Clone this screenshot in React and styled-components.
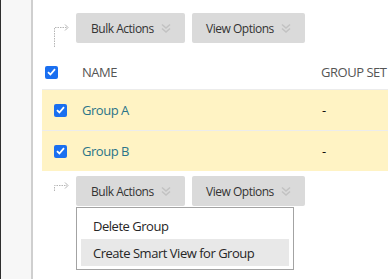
import React from "react";
import styled, { createGlobalStyle } from "styled-components";

const GlobalStyle = createGlobalStyle`
  html, body {
    margin: 0;
    padding: 0;
    background: #ffffff;
    font-family: "Open Sans", "Noto Sans", sans-serif;
    color: #333333;
    letter-spacing: -0.03em;
  }
`;

const Page = styled.div`
  display: flex;
  width: 388px;
  height: 279px;
  overflow: hidden;
`;

const DarkEdge = styled.div`
  width: 1px;
  background: #2e2e2e;
  flex-shrink: 0;
`;

const SidePanel = styled.div`
  width: 30px;
  background: #f7f7f7;
  border-right: 2px solid #cfcfcf;
  flex-shrink: 0;
`;

const Content = styled.div`
  flex: 1;
  padding-left: 9px;
  min-width: 0;
`;

const Toolbar = styled.div`
  position: relative;
  display: flex;
  align-items: flex-start;
  gap: 7px;
  height: 30px;
  margin-top: ${p => p.top}px;
  padding-left: 34px;
`;

const Connector = styled.svg`
  position: absolute;
  left: 10px;
  top: ${p => p.offset}px;
`;

const ActionButton = styled.div`
  position: relative;
  display: flex;
  align-items: center;
  width: ${p => p.width}px;
  height: 30px;
  box-sizing: border-box;
  padding-left: ${p => p.pad}px;
  background: #dadada;
  border-radius: 2px;
  font-size: 12px;
  color: #333333;
`;

const Chevron = styled.svg`
  margin-left: 7px;
`;

const Menu = styled.div`
  position: absolute;
  left: 0;
  top: 31px;
  width: 218px;
  box-sizing: border-box;
  background: #ffffff;
  border: 1px solid #a3a3a3;
  padding: 4px 4px 3px;
  z-index: 2;
`;

const MenuItem = styled.div`
  height: 27px;
  display: flex;
  align-items: center;
  padding-left: 12px;
  font-size: 13px;
  color: #262626;
  background: ${p => (p.active ? "#e8e8e8" : "transparent")};
  white-space: nowrap;
`;

const Table = styled.div`
  margin-top: 12px;
`;

const HeaderRow = styled.div`
  display: grid;
  grid-template-columns: 40px 239px 1fr;
  align-items: center;
  height: 34px;
  font-size: 13px;
  color: #555555;
  white-space: nowrap;
  overflow: hidden;
`;

const Row = styled.div`
  display: grid;
  grid-template-columns: 40px 239px 1fr;
  align-items: center;
  height: 40px;
  background: #fff3c4;
  border-top: 1px solid #ececec;
  font-size: 13px;
`;

const CheckCell = styled.div`
  display: flex;
  align-items: center;
  padding-left: ${p => p.pad}px;
`;

const Box = styled.span`
  display: inline-flex;
  align-items: center;
  justify-content: center;
  width: 13px;
  height: 13px;
  background: #1a6ff0;
  border-radius: 2px;
`;

const GroupName = styled.span`
  color: #2b7489;
`;

const Dash = styled.span`
  color: #111111;
  padding-left: 1px;
`;

const Check = ({ pad }) => (
  <CheckCell pad={pad}>
    <Box>
      <svg width="9" height="8" viewBox="0 0 9 8">
        <path d="M1 4.2 L3.4 6.5 L8 1.2" fill="none" stroke="#fff" strokeWidth="1.8" />
      </svg>
    </Box>
  </CheckCell>
);

const DoubleChevron = () => (
  <Chevron width="10" height="11" viewBox="0 0 10 11">
    <path d="M1 1.5 L5 5 L9 1.5 M1 5.5 L5 9 L9 5.5" fill="none" stroke="#c2c2c2" strokeWidth="1.6" />
  </Chevron>
);

const Arrow = ({ offset, height, turnY }) => (
  <Connector offset={offset} width="20" height={height} viewBox={`0 0 20 ${height}`}>
    <path
      d={`M2.5 ${height} L2.5 ${turnY} L15 ${turnY}`}
      fill="none"
      stroke="#b5b5b5"
      strokeWidth="1"
      strokeDasharray="1.5 1"
    />
    <path
      d={`M13 ${turnY - 3} L16 ${turnY} L13 ${turnY + 3}`}
      fill="none"
      stroke="#b5b5b5"
      strokeWidth="1"
    />
  </Connector>
);

const Buttons = ({ withMenu }) => (
  <>
    <ActionButton width={109} pad={15}>
      Bulk Actions
      <DoubleChevron />
      {withMenu && (
        <Menu>
          <MenuItem>Delete Group</MenuItem>
          <MenuItem active>Create Smart View for Group</MenuItem>
        </Menu>
      )}
    </ActionButton>
    <ActionButton width={113} pad={14}>
      View Options
      <DoubleChevron />
    </ActionButton>
  </>
);

const App = () => (
  <>
    <GlobalStyle />
    <Page>
      <DarkEdge />
      <SidePanel />
      <Content>
        <Toolbar top={13}>
          <Arrow offset={11} height={23} turnY={3.5} />
          <Buttons />
        </Toolbar>
        <Table>
          <HeaderRow>
            <Check pad={3} />
            <span>NAME</span>
            <span>GROUP SET</span>
          </HeaderRow>
          <Row>
            <Check pad={12} />
            <GroupName>Group A</GroupName>
            <Dash>-</Dash>
          </Row>
          <Row>
            <Check pad={12} />
            <GroupName>Group B</GroupName>
            <Dash>-</Dash>
          </Row>
        </Table>
        <Toolbar top={5}>
          <Arrow offset={-5} height={20} turnY={14.5} />
          <Buttons withMenu />
        </Toolbar>
      </Content>
    </Page>
  </>
);

export default App;
